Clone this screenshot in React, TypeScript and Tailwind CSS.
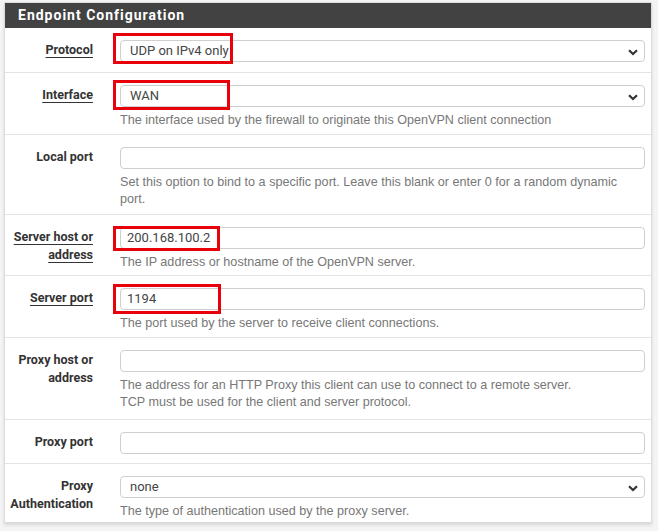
import React from 'react';

type Row = {
  label: string[];
  link?: boolean;
  kind: 'select' | 'input';
  value?: string;
  help?: string[];
  mark?: { w: number; top: number; h: number };
  h: number;
};

const rows: Row[] = [
  { label: ['Protocol'], link: true, kind: 'select', value: 'UDP on IPv4 only', mark: { w: 120, top: 5, h: 31 }, h: 44 },
  {
    label: ['Interface'], link: true, kind: 'select', value: 'WAN',
    help: ['The interface used by the firewall to originate this OpenVPN client connection'],
    mark: { w: 117, top: 7, h: 30 }, h: 62,
  },
  {
    label: ['Local port'], kind: 'input',
    help: ['Set this option to bind to a specific port. Leave this blank or enter 0 for a random dynamic', 'port.'],
    h: 80,
  },
  {
    label: ['Server host or', 'address'], link: true, kind: 'input', value: '200.168.100.2',
    help: ['The IP address or hostname of the OpenVPN server.'],
    mark: { w: 107, top: 11, h: 25 }, h: 61,
  },
  {
    label: ['Server port'], link: true, kind: 'input', value: '1194',
    help: ['The port used by the server to receive client connections.'],
    mark: { w: 108, top: 8, h: 30 }, h: 62,
  },
  {
    label: ['Proxy host or', 'address'], kind: 'input',
    help: ['The address for an HTTP Proxy this client can use to connect to a remote server.', 'TCP must be used for the client and server protocol.'],
    h: 82,
  },
  { label: ['Proxy port'], kind: 'input', h: 44 },
  {
    label: ['Proxy', 'Authentication'], kind: 'select', value: 'none',
    help: ['The type of authentication used by the proxy server.'],
    h: 59,
  },
];

const Chevron = () => (
  <svg width="10" height="7" viewBox="0 0 10 7" className="absolute right-[6px] top-[8px]">
    <path d="M1 1.2 L5 5 L9 1.2" fill="none" stroke="#333" strokeWidth="2.2" />
  </svg>
);

export default function App() {
  return (
    <div className="min-h-screen bg-[#f4f4f4] pt-[2px] pl-[4px] pr-[6px] font-['Roboto',sans-serif]">
      <div className="w-[648px] border border-[#dcdcdc] bg-white shadow-[0_2px_3px_rgba(0,0,0,0.12)]">
        <div className="h-[25px] bg-[#424242] pl-[13px] text-[14px] font-bold leading-[24px] tracking-[1px] text-white">
          Endpoint Configuration
        </div>
        {rows.map((r, i) => (
          <div
            key={i}
            className={`flex ${i > 0 ? 'border-t border-[#e3e3e3]' : ''}`}
            style={{ height: r.h }}
          >
            <div className="w-[100px] shrink-0 pr-[12px] pt-[13px] text-right text-[12.5px] font-bold leading-[18px] text-[#333]">
              {r.label.map((l, j) => (
                <div key={j}>
                  <span className={r.link ? 'underline underline-offset-[3px] decoration-[1px]' : ''}>{l}</span>
                </div>
              ))}
            </div>
            <div className="relative flex-1 pl-[15px] pr-[6px] pt-[12px]">
              <div
                className={`relative h-[22px] rounded-[4px] border border-[#cfcfcf] bg-white text-[13px] leading-[20px] text-[#444] ${
                  r.kind === 'select' ? 'pl-[9px]' : 'pl-[6px]'
                }`}
              >
                {r.value}
                {r.kind === 'select' && <Chevron />}
              </div>
              {r.help && (
                <div className="mt-[5px] font-['Liberation_Sans',Arial,sans-serif] text-[12.6px] leading-[17px] text-[#777]">
                  {r.help.map((h, j) => (
                    <div key={j}>{h}</div>
                  ))}
                </div>
              )}
              {r.mark && (
                <div
                  className="absolute left-[8px] z-10 border-[3px] border-[#e8000b]"
                  style={{ width: r.mark.w, top: r.mark.top, height: r.mark.h }}
                />
              )}
            </div>
          </div>
        ))}
      </div>
    </div>
  );
}
